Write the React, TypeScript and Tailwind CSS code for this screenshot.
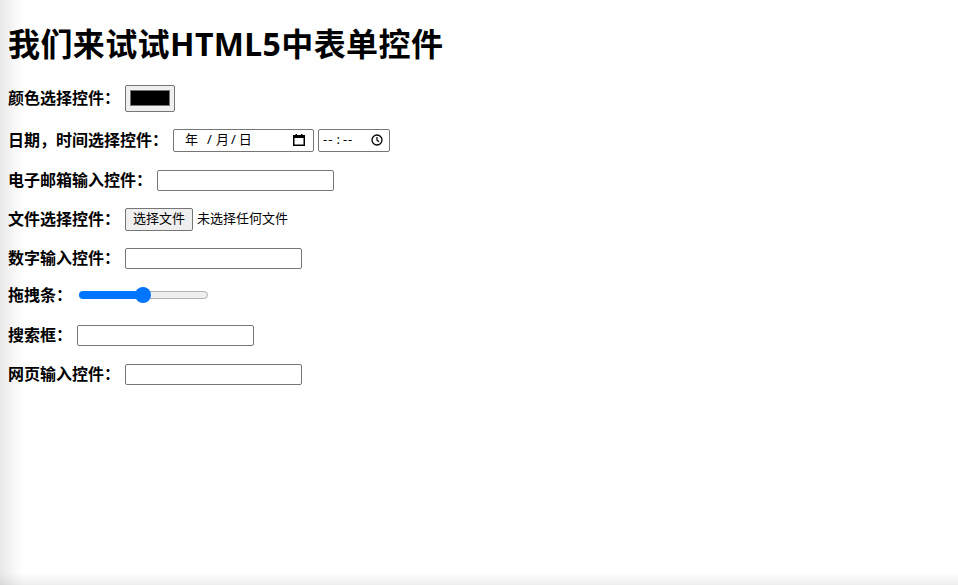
const FONT = "font-['Noto_Sans','Noto_Sans_CJK_SC',sans-serif]";

function TextBox() {
  return (
    <input
      type="text"
      className="w-[177px] h-[21px] border border-[#767676] rounded-[2px] bg-white px-[2px] text-[13px] outline-none"
    />
  );
}

function ColorBox() {
  return (
    <div className="w-[50px] h-[27px] border border-[#767676] rounded-[2px] bg-[#efefef] flex items-center justify-center">
      <div className="w-[40px] h-[16px] bg-black border border-[#777]" />
    </div>
  );
}

function CalendarIcon() {
  return (
    <svg width="12" height="12" viewBox="0 0 12 12">
      <rect x="0.75" y="1.75" width="10.5" height="9.5" fill="none" stroke="#000" strokeWidth="1.5" />
      <rect x="0" y="1" width="12" height="3" fill="#000" />
      <rect x="2.5" y="0" width="1.5" height="2" fill="#000" />
      <rect x="8" y="0" width="1.5" height="2" fill="#000" />
    </svg>
  );
}

function ClockIcon() {
  return (
    <svg width="12" height="12" viewBox="0 0 12 12">
      <circle cx="6" cy="6" r="5" fill="none" stroke="#000" strokeWidth="1.3" />
      <path d="M6 3v3.2l2 1.6" fill="none" stroke="#000" strokeWidth="1.2" />
    </svg>
  );
}

function DateBox() {
  return (
    <div className="w-[141px] h-[23px] border border-[#767676] rounded-[2px] bg-white flex items-center pl-[11px] pr-[8px] text-[13px]">
      <span className="flex-1 flex items-center">
        <span>年</span>
        <span className="ml-[9px]">/</span>
        <span className="ml-[4px]">月</span>
        <span className="ml-[2px]">/</span>
        <span className="ml-[3px]">日</span>
      </span>
      <CalendarIcon />
    </div>
  );
}

function TimeBox() {
  return (
    <div className="w-[72px] h-[23px] border border-[#767676] rounded-[2px] bg-white flex items-center pl-[4px] pr-[6px] text-[13px]">
      <span className="flex-1 flex items-center">
        <span className="tracking-[1px]">--</span>
        <span className="mx-[3px]">:</span>
        <span className="tracking-[1px]">--</span>
      </span>
      <ClockIcon />
    </div>
  );
}

function FileBox() {
  return (
    <div className="flex items-center gap-[4px] text-[13px]">
      <div className="h-[23px] px-[7px] border border-[#767676] rounded-[2px] bg-[#efefef] flex items-center">
        选择文件
      </div>
      <span>未选择任何文件</span>
    </div>
  );
}

function Slider() {
  return (
    <div className="ml-[2px] w-[129px] h-[16px] flex items-center">
      <div className="w-[64px] h-[8px] bg-[#0075ff] rounded-l-full" />
      <div className="w-[16px] h-[16px] -mx-[8px] rounded-full bg-[#0075ff] relative z-10" />
      <div className="flex-1 h-[8px] bg-[#efefef] border border-[#b2b2b2] rounded-r-full" />
    </div>
  );
}

const ROWS = [
  { label: "颜色选择控件：", mt: "mt-[19px]", control: <ColorBox /> },
  {
    label: "日期，时间选择控件：",
    mt: "mt-[18px]",
    control: (
      <div className="flex items-center gap-[4px]">
        <DateBox />
        <TimeBox />
      </div>
    ),
  },
  { label: "电子邮箱输入控件：", mt: "mt-[16px]", control: <TextBox /> },
  { label: "文件选择控件：", mt: "mt-[15px]", control: <FileBox /> },
  { label: "数字输入控件：", mt: "mt-[15px]", control: <TextBox /> },
  { label: "拖拽条：", mt: "mt-[13px]", control: <Slider /> },
  { label: "搜索框：", mt: "mt-[16px]", control: <TextBox /> },
  { label: "网页输入控件：", mt: "mt-[15px]", control: <TextBox /> },
];

export default function App() {
  return (
    <div
      className={`min-h-screen bg-white text-black px-[8px] pt-[21px] ${FONT} bg-[linear-gradient(to_top,rgba(0,0,0,0.07),transparent_12px),linear-gradient(to_right,rgba(0,0,0,0.09),transparent_22px)]`}
    >
      <h1 className="text-[32px] font-bold leading-[46px] h-[46px] whitespace-nowrap tracking-[0.4px]">
        我们来试试HTML5中表单控件
      </h1>
      <div className="flex flex-col">
        {ROWS.map((r) => (
          <div key={r.label} className={`${r.mt} h-[24px] flex items-center gap-[5px]`}>
            <span className="text-[16px] font-bold whitespace-nowrap">{r.label}</span>
            {r.control}
          </div>
        ))}
      </div>
    </div>
  );
}
